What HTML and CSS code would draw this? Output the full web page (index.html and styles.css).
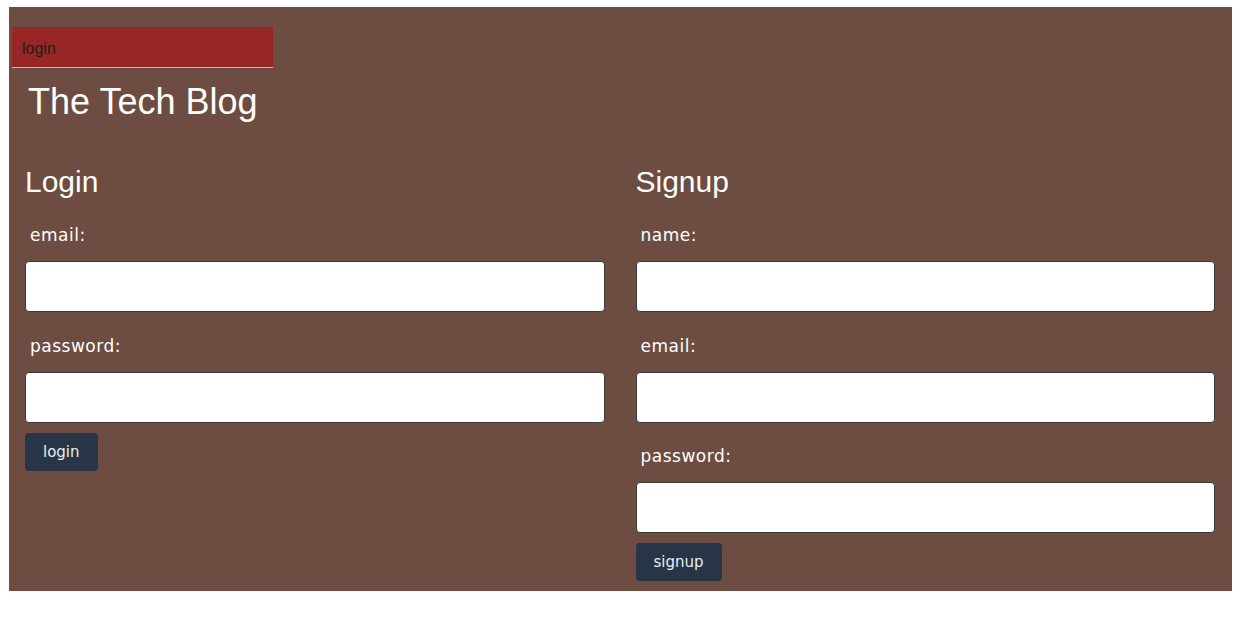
FILE: index.html
```html
<!DOCTYPE html>
<html>
<head>
<meta charset="utf-8">
<link rel="stylesheet" href="styles.css">
<title>The Tech Blog</title>
</head>
<body>
<div class="page">
  <nav class="nav"><a class="nav-link" href="#">login</a></nav>
  <header class="header"><h1 class="title">The Tech Blog</h1></header>
  <main class="columns">
    <section class="col">
      <h2 class="col-title">Login</h2>
      <form class="form">
        <label class="label">email:</label>
        <input class="input" type="text">
        <label class="label">password:</label>
        <input class="input" type="password">
        <button class="btn" type="button">login</button>
      </form>
    </section>
    <section class="col">
      <h2 class="col-title">Signup</h2>
      <form class="form">
        <label class="label">name:</label>
        <input class="input" type="text">
        <label class="label">email:</label>
        <input class="input" type="text">
        <label class="label">password:</label>
        <input class="input" type="password">
        <button class="btn" type="button">signup</button>
      </form>
    </section>
  </main>
</div>
</body>
</html>
```
FILE: styles.css
```css
html, body { margin: 0; padding: 0; background: #ffffff; }
body { font-family: "Liberation Sans", Arial, sans-serif; }
.page {
  background: #6d4c41;
  margin: 7px 18px 0 9px;
  padding: 20px 17px 10px 3px;
}
.nav {
  width: 261px;
  height: 41px;
  background: #992626;
  border-bottom: 1px solid #b9bcc4;
  display: flex;
  align-items: center;
  padding: 3px 0 0 10px;
  box-sizing: border-box;
}
.nav-link {
  color: #1e1e1e;
  text-decoration: none;
  font-size: 16px;
  font-family: "Liberation Sans", Arial, sans-serif;
}
.header { padding: 13px 0 0 16px; }
.title {
  margin: 0;
  color: #ffffff;
  font-weight: normal;
  font-size: 36px;
  line-height: 41px;
}
.columns {
  display: grid;
  grid-template-columns: 1fr 1fr;
  column-gap: 31px;
  padding: 42px 0 0 13px;
}
.col-title {
  margin: 0;
  color: #ffffff;
  font-weight: normal;
  font-size: 30px;
  line-height: 35px;
}
.form { display: flex; flex-direction: column; align-items: flex-start; }
.label {
  color: #ffffff;
  font-family: "DejaVu Sans", Verdana, sans-serif;
  font-size: 17px;
  line-height: 20px;
  letter-spacing: 0.5px;
  padding-left: 5px;
  margin: 26px 0 16px;
}
.input + .label { margin-top: 23.5px; }
.input {
  width: 100%;
  height: 51px;
  box-sizing: border-box;
  border: 1px solid #3a3a3a;
  border-radius: 4px;
  background: #ffffff;
  margin: 0;
}
.btn {
  margin-top: 10px;
  height: 38px;
  padding: 0 18px;
  background: #273546;
  color: #e8eef2;
  border: none;
  border-radius: 4px;
  font-family: "DejaVu Sans", Verdana, sans-serif;
  font-size: 15px;
}
```
